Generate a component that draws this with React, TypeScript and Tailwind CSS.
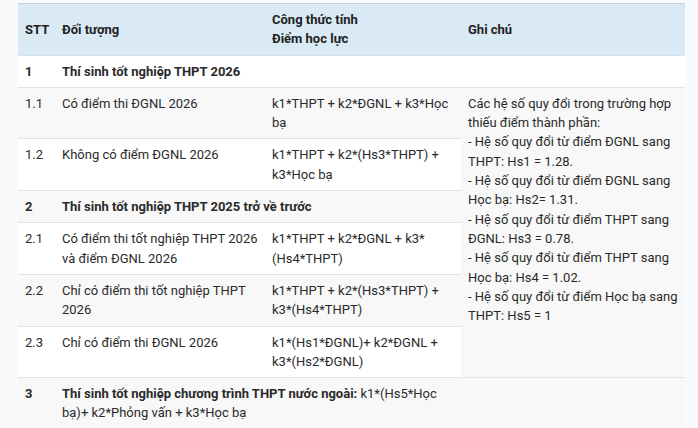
import React from "react";

const td = "px-[7px] py-[6px] align-top";
const rowCls = "border-b border-[#e4e4e4]";

export default function App() {
  return (
    <div
      className="w-[698px] h-[428px] overflow-hidden bg-[#f9fafc] pt-[3px] pl-[18px] text-[13px] leading-[19.3px] text-[#2a2a2a]"
      style={{ fontFamily: "Roboto, 'Noto Sans', sans-serif" }}
    >
      <table className="w-[667px] table-fixed border-t border-[#c9d0d4]">
        <colgroup>
          <col className="w-[37px]" />
          <col className="w-[210px]" />
          <col className="w-[196px]" />
          <col className="w-[224px]" />
        </colgroup>
        <thead>
          <tr className="bg-[#d9eaf4] border-b border-[#d2e2ec] font-bold text-left text-[#222]">
            <th className="px-[7px] py-[6px] align-middle">STT</th>
            <th className="px-[7px] py-[6px] align-middle">Đối tượng</th>
            <th className="px-[7px] py-[6px] align-middle">
              Công thức tính
              <br />
              Điểm học lực
            </th>
            <th className="px-[7px] py-[6px] align-middle">Ghi chú</th>
          </tr>
        </thead>
        <tbody>
          <tr className={`${rowCls} bg-white font-bold`}>
            <td className={td}>1</td>
            <td className={td} colSpan={2}>
              Thí sinh tốt nghiệp THPT 2026
            </td>
            <td className={td}></td>
          </tr>
          <tr className={`${rowCls} bg-[#f8f8f8]`}>
            <td className={td}>1.1</td>
            <td className={td}>Có điểm thi ĐGNL 2026</td>
            <td className={td}>k1*THPT + k2*ĐGNL + k3*Học bạ</td>
            <td className={`${td} bg-[#f8f8f8]`} rowSpan={6}>
              Các hệ số quy đổi trong trường hợp thiếu điểm thành phần:
              <br />- Hệ số quy đổi từ điểm ĐGNL sang THPT: Hs1 = 1.28.
              <br />- Hệ số quy đổi từ điểm ĐGNL sang Học bạ: Hs2= 1.31.
              <br />- Hệ số quy đổi từ điểm THPT sang ĐGNL: Hs3 = 0.78.
              <br />- Hệ số quy đổi từ điểm THPT sang Học bạ: Hs4 = 1.02.
              <br />- Hệ số quy đổi từ điểm Học bạ sang THPT: Hs5 = 1
            </td>
          </tr>
          <tr className={`${rowCls} bg-white`}>
            <td className={td}>1.2</td>
            <td className={td}>Không có điểm ĐGNL 2026</td>
            <td className={td}>k1*THPT + k2*(Hs3*THPT) + k3*Học bạ</td>
          </tr>
          <tr className={`${rowCls} bg-[#f8f8f8] font-bold`}>
            <td className={td}>2</td>
            <td className={td} colSpan={2}>
              Thí sinh tốt nghiệp THPT 2025 trở về trước
            </td>
          </tr>
          <tr className={`${rowCls} bg-white`}>
            <td className={td}>2.1</td>
            <td className={td}>Có điểm thi tốt nghiệp THPT 2026 và điểm ĐGNL 2026</td>
            <td className={td}>k1*THPT + k2*ĐGNL + k3*(Hs4*THPT)</td>
          </tr>
          <tr className={`${rowCls} bg-[#f8f8f8]`}>
            <td className={td}>2.2</td>
            <td className={td}>Chỉ có điểm thi tốt nghiệp THPT 2026</td>
            <td className={td}>k1*THPT + k2*(Hs3*THPT) + k3*(Hs4*THPT)</td>
          </tr>
          <tr className={`${rowCls} bg-white`}>
            <td className={td}>2.3</td>
            <td className={td}>Chỉ có điểm thi ĐGNL 2026</td>
            <td className={td}>k1*(Hs1*ĐGNL)+ k2*ĐGNL + k3*(Hs2*ĐGNL)</td>
          </tr>
          <tr className={`${rowCls} bg-[#f8f8f8]`}>
            <td className={`${td} font-bold`}>3</td>
            <td className={td} colSpan={2}>
              <span className="font-bold">Thí sinh tốt nghiệp chương trình THPT nước ngoài:</span> k1*(Hs5*Học
              bạ)+ k2*Phỏng vấn + k3*Học bạ
            </td>
            <td className={td}></td>
          </tr>
        </tbody>
      </table>
    </div>
  );
}
